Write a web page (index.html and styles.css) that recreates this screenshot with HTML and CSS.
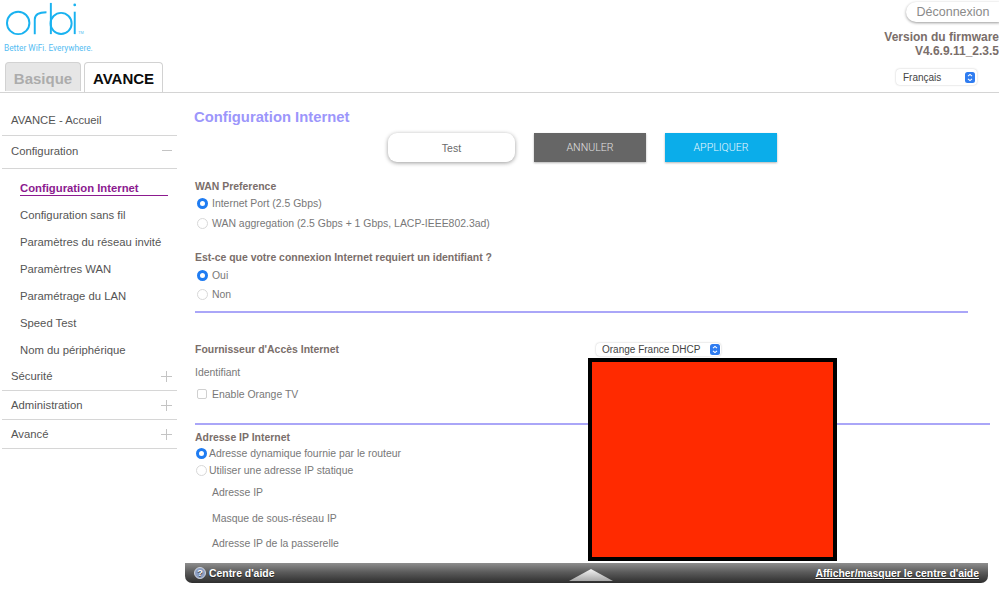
FILE: index.html
```html
<!DOCTYPE html>
<html lang="fr">
<head>
<meta charset="utf-8">
<title>Configuration Internet</title>
<link rel="stylesheet" href="styles.css">
</head>
<body>
<div class="page">
  <header class="top">
    <div class="brand">
      <svg class="logo" width="90" height="40" viewBox="0 0 90 40" fill="none" stroke="#19b2f0" stroke-width="2" aria-label="orbi">
        <circle cx="17.5" cy="23.5" r="11.5"/>
        <path d="M34.5 35V20c0-5 4-7.5 12-7.5"/>
        <path d="M51 3v32"/>
        <circle cx="61.5" cy="24" r="10.8"/>
        <path d="M75.5 12v23"/>
        <circle cx="75.5" cy="5" r="1.4" fill="#19b2f0" stroke="none"/>
        <text x="79" y="35" class="tm">TM</text>
      </svg>
      <div class="tagline">Better WiFi. Everywhere.</div>
      <nav class="tabs">
        <div class="tab tab-off">Basique</div>
        <div class="tab tab-on">AVANCE</div>
      </nav>
    </div>
    <div class="account">
      <div class="logout">Déconnexion</div>
      <div class="firmware">Version du firmware<br>V4.6.9.11_2.3.5</div>
      <div class="picker lang"><span>Français</span>
        <svg class="stepper" width="10" height="11" viewBox="0 0 10 11"><rect width="10" height="11" rx="2.5" fill="#2f7cf0"/><path d="M3 4.2 5 2.4 7 4.2M3 6.8 5 8.6 7 6.8" fill="none" stroke="#fff" stroke-width="1.1"/></svg>
      </div>
    </div>
  </header>

  <div class="content">
    <aside class="side">
      <div class="item item-first">AVANCE - Accueil</div>
      <div class="item item-config">Configuration<span class="minus"></span></div>
      <div class="subs">
        <div class="sub sub-on">Configuration Internet</div>
        <div class="sub">Configuration sans fil</div>
        <div class="sub">Paramètres du réseau invité</div>
        <div class="sub">Paramèrtres WAN</div>
        <div class="sub">Paramétrage du LAN</div>
        <div class="sub">Speed Test</div>
        <div class="sub">Nom du périphérique</div>
      </div>
      <div class="item">Sécurité<span class="plus"></span></div>
      <div class="item">Administration<span class="plus"></span></div>
      <div class="item">Avancé<span class="plus"></span></div>
    </aside>

    <main class="main">
      <h1 class="title">Configuration Internet</h1>
      <div class="actions">
        <button class="btn btn-test">Test</button>
        <button class="btn btn-cancel">ANNULER</button>
        <button class="btn btn-apply">APPLIQUER</button>
      </div>

      <div class="row head m16">WAN Preference</div>
      <div class="row m1"><span class="radio on"></span>Internet Port (2.5 Gbps)</div>
      <div class="row m4"><span class="radio"></span>WAN aggregation (2.5 Gbps + 1 Gbps, LACP-IEEE802.3ad)</div>

      <div class="row head m18">Est-ce que votre connexion Internet requiert un identifiant ?</div>
      <div class="row m2"><span class="radio on"></span>Oui</div>
      <div class="row m3"><span class="radio"></span>Non</div>
      <div class="rule rule-short"></div>

      <div class="row head isp">
        <span class="isp-label">Fournisseur d'Accès Internet</span>
        <div class="picker isp-picker"><span>Orange France DHCP</span>
          <svg class="stepper" width="10" height="11" viewBox="0 0 10 11"><rect width="10" height="11" rx="2.5" fill="#2f7cf0"/><path d="M3 4.2 5 2.4 7 4.2M3 6.8 5 8.6 7 6.8" fill="none" stroke="#fff" stroke-width="1.1"/></svg>
        </div>
      </div>
      <div class="row m7">Identifiant</div>
      <div class="row m6"><span class="check"></span>Enable Orange TV</div>
      <div class="rule rule-long"></div>

      <div class="row head m4">Adresse IP Internet</div>
      <div class="row"><span class="radio tight on"></span>Adresse dynamique fournie par le routeur</div>
      <div class="row m1"><span class="radio tight"></span>Utiliser une adresse IP statique</div>
      <div class="row field m6">Adresse IP</div>
      <div class="row field m10">Masque de sous-réseau IP</div>
      <div class="row field m9">Adresse IP de la passerelle</div>
    </main>
  </div>

  <footer class="help">
    <div class="help-left">
      <svg width="12" height="12" viewBox="0 0 12 12"><circle cx="6" cy="6" r="5.5" fill="#8d9fc4" stroke="#e4e8f0" stroke-width=".8"/><text x="6" y="9" text-anchor="middle" class="help-q">?</text></svg>
      Centre d'aide
    </div>
    <div class="help-arrow"></div>
    <div class="help-link">Afficher/masquer le centre d'aide</div>
  </footer>

  <div class="redact"></div>
</div>
</body>
</html>
```

FILE: styles.css
```css
* { box-sizing: border-box; }
html, body { margin: 0; padding: 0; background: #fff; }
body { width: 999px; height: 589px; overflow: hidden; font-family: "Liberation Sans", Arial, sans-serif; }
.page { position: relative; width: 999px; height: 589px; display: flex; flex-direction: column; overflow: hidden; }

/* header */
.top { height: 93px; display: flex; justify-content: space-between; border-bottom: 1px solid #d4d4d4; }
.brand { display: flex; flex-direction: column; }
.logo { display: block; margin: 0; }
.tm { font: 4px "Liberation Sans", Arial, sans-serif; fill: #55bdf2; stroke: none; }
.tagline { margin: 4px 0 0 4px; font-family: Roboto, "Liberation Sans", sans-serif; font-size: 8.3px; line-height: 10px; color: #55bdf2; white-space: nowrap; }
.tabs { display: flex; gap: 3px; margin: 9px 0 0 5px; }
.tab { height: 30px; padding-top: 2px; display: flex; align-items: center; justify-content: center; font-size: 15px; font-weight: 700; border: 1px solid #d2d2d2; border-bottom: 0; border-radius: 4px 4px 0 0; }
.tab-off { width: 76px; height: 29px; background: #e6e6e6; color: #acacac; }
.tab-on { width: 79px; background: #fff; color: #0b0b0b; }

.account { width: 115px; display: flex; flex-direction: column; align-items: flex-end; }
.logout { width: 94px; height: 20px; margin: 2px -1px 0 0; border-radius: 10px 0 0 10px / 10px; background: #fff; box-shadow: 0 1px 3px rgba(0,0,0,.4); font-size: 12.5px; line-height: 20px; text-align: center; color: #8a8a8a; }
.firmware { margin-top: 8px; font-size: 12px; line-height: 14px; font-weight: 700; color: #7a6e6a; text-align: right; white-space: nowrap; }
.picker { display: flex; align-items: center; justify-content: space-between; background: #fff; border-radius: 4px; box-shadow: 0 0 2px rgba(0,0,0,.25); color: #444; font-size: 10px; }
.lang { width: 81px; height: 16px; margin: 11px 22px 0 0; padding: 0 2px 0 7px; }
.stepper { display: block; flex: none; }

/* body */
.content { height: 470px; display: flex; }
.side { width: 175px; margin-left: 2px; flex: none; color: #555; font-size: 11.3px; }
.item { display: flex; align-items: center; justify-content: space-between; height: 29px; padding: 0 2px 0 9px; border-bottom: 1px solid #d6d6d6; }
.item-first { height: 43px; padding-top: 12px; }
.item-config { height: 33px; padding-bottom: 3px; }
.minus { width: 10px; height: 1px; margin-right: 3px; background: #c4c4c4; }
.plus { width: 11px; height: 11px; margin-right: 3px; background: linear-gradient(#c4c4c4, #c4c4c4) center / 11px 1px no-repeat, linear-gradient(#c4c4c4, #c4c4c4) center / 1px 11px no-repeat; }
.subs { display: flex; flex-direction: column; padding: 6px 0 0 18px; height: 193px; }
.sub { height: 27px; line-height: 27px; flex: none; white-space: nowrap; }
.sub-on { width: 148px; height: 21px; line-height: 27px; margin-bottom: 6px; color: #8c1a8f; font-weight: 700; font-size: 11.3px; border-bottom: 1px solid #8c1a8f; }

.main { flex: 1; padding: 14px 0 0 18px; min-width: 0; color: #787878; font-size: 10.45px; }
.title { margin: 0 0 0 -1px; height: 20px; line-height: 20px; font-size: 14.8px; font-weight: 700; color: #9c96fb; }
.actions { display: flex; margin: 6px 0 0 193px; }
.btn { height: 29px; border: 0; padding: 0; font: 300 10.6px Roboto, "Liberation Sans", sans-serif; box-shadow: 0 1px 2px rgba(0,0,0,.3); }
.btn-test { width: 127px; margin-right: 19px; background: #fff; color: #6a6a6a; font: 10.5px "Liberation Sans", Arial, sans-serif; border-radius: 9px; box-shadow: 0 1px 4px rgba(0,0,0,.4); }
.btn-cancel { width: 112px; margin-right: 19px; background: #666; color: #e0e0e0; }
.btn-apply { width: 112px; background: #0badea; color: #e8f8ff; }

.row { height: 16px; display: flex; align-items: center; white-space: nowrap; }
.head { font-weight: 700; color: #7a6e6a; font-size: 10.45px; }
.m1 { margin-top: 1px; } .m2 { margin-top: 2px; } .m3 { margin-top: 3px; } .m4 { margin-top: 4px; }
.m6 { margin-top: 6px; } .m7 { margin-top: 7px; } .m9 { margin-top: 9px; }
.m10 { margin-top: 10px; } .m16 { margin-top: 16px; } .m18 { margin-top: 18px; }

.radio { flex: none; width: 11px; height: 11px; margin: 0 4px 0 2px; border-radius: 50%; background: #fff; border: 1px solid #d8d8d8; }
.radio.on { border: 3px solid #1f7cf2; }
.radio.tight { margin: 0 2px 0 1px; }
.check { flex: none; width: 10px; height: 10px; margin: 0 5px 0 2px; border: 1px solid #d0d0d0; border-radius: 2px; background: #fff; }
.field { padding-left: 17px; }

.rule { height: 2px; background: #aaa6f8; }
.rule-short { margin: 9px 31px 0 0; }
.rule-long { margin: 21px 9px 0 0; }

.isp { margin-top: 28px; }
.isp-label { width: 401px; flex: none; }
.isp-picker { width: 125px; height: 13px; margin-top: 1px; padding: 0 1px 0 6px; font-weight: 400; color: #444; font-size: 10px; }

/* footer */
.help { height: 20px; margin: 0 11px 0 185px; display: flex; align-items: center; justify-content: space-between; position: relative; padding: 0 9px; border-radius: 0 0 7px 7px; background: linear-gradient(#8e8e8e, #5c5c5c 45%, #2e2e2e); color: #fff; font-size: 10.4px; font-weight: 700; }
.help-left { display: flex; align-items: center; gap: 3px; text-shadow: 0 1px 1px #222; }
.help-q { font: 700 9px "Liberation Sans", Arial, sans-serif; fill: #fff; }
.help-link { text-decoration: underline; text-shadow: 0 1px 1px #222; }
.help-arrow { position: absolute; left: 384px; bottom: 2px; width: 44px; height: 12px; background: linear-gradient(#f4f4f4, #a8a8a8); clip-path: polygon(50% 0, 100% 100%, 0 100%); }

/* redaction block that covers part of the form */
.redact { position: absolute; left: 588px; top: 358px; width: 249px; height: 203px; background: #ff2a00; border: 4px solid #000; }
```
